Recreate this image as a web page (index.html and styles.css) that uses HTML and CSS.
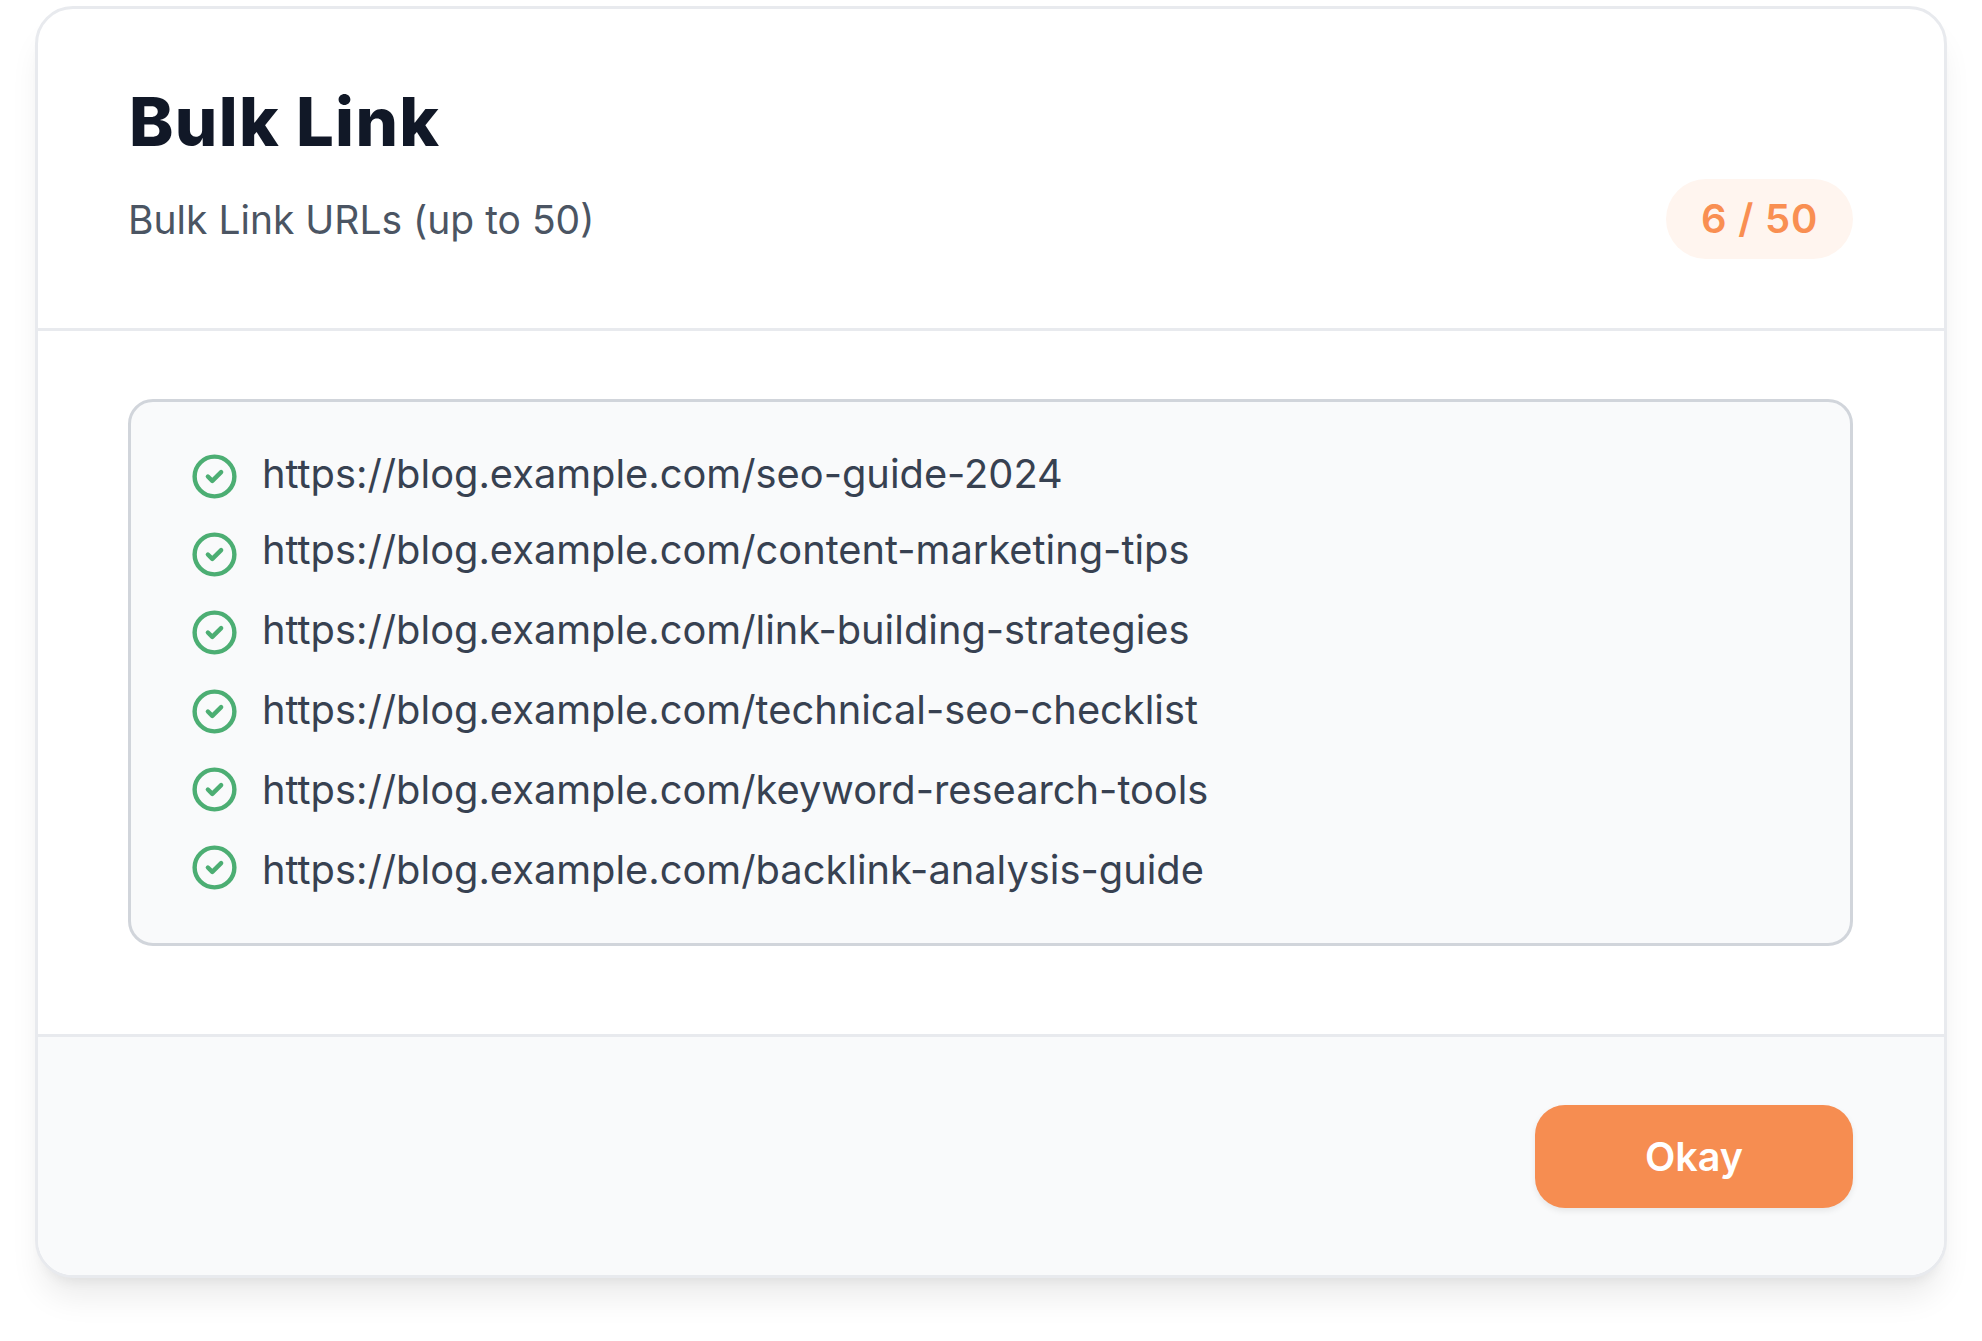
FILE: index.html
```html
<!DOCTYPE html>
<html lang="en">
<head>
  <meta charset="UTF-8">
  <meta name="viewport" content="width=device-width, initial-scale=1.0">
  <title>Bulk Link</title>
  <link rel="stylesheet" href="styles.css">
</head>
<body>
  <div class="card">
    <header class="card-header">
      <div class="heading">
        <h1>Bulk Link</h1>
        <p>Bulk Link URLs (up to 50)</p>
      </div>
      <span class="counter">6 / 50</span>
    </header>

    <div class="card-body">
      <div class="url-box">
        <div class="icons">
          <svg class="check" viewBox="0 0 24 24"><path d="M9 12l2 2 4-4m6 2a9 9 0 11-18 0 9 9 0 0118 0z"/></svg>
          <svg class="check" viewBox="0 0 24 24"><path d="M9 12l2 2 4-4m6 2a9 9 0 11-18 0 9 9 0 0118 0z"/></svg>
          <svg class="check" viewBox="0 0 24 24"><path d="M9 12l2 2 4-4m6 2a9 9 0 11-18 0 9 9 0 0118 0z"/></svg>
          <svg class="check" viewBox="0 0 24 24"><path d="M9 12l2 2 4-4m6 2a9 9 0 11-18 0 9 9 0 0118 0z"/></svg>
          <svg class="check" viewBox="0 0 24 24"><path d="M9 12l2 2 4-4m6 2a9 9 0 11-18 0 9 9 0 0118 0z"/></svg>
          <svg class="check" viewBox="0 0 24 24"><path d="M9 12l2 2 4-4m6 2a9 9 0 11-18 0 9 9 0 0118 0z"/></svg>
        </div>
        <ul class="urls">
          <li>https://blog.example.com/seo-guide-2024</li>
          <li>https://blog.example.com/content-marketing-tips</li>
          <li>https://blog.example.com/link-building-strategies</li>
          <li>https://blog.example.com/technical-seo-checklist</li>
          <li>https://blog.example.com/keyword-research-tools</li>
          <li>https://blog.example.com/backlink-analysis-guide</li>
        </ul>
      </div>
    </div>

    <footer class="card-footer">
      <button class="okay">Okay</button>
    </footer>
  </div>
</body>
</html>
```

FILE: styles.css
```css
* {
  box-sizing: border-box;
  margin: 0;
  padding: 0;
}

html,
body {
  height: 100%;
}

body {
  font-family: Inter, 'Noto Sans', sans-serif;
  background: #ffffff;
  padding: 6px 35px 63px 35px;
}

.card {
  background: #ffffff;
  border: 3px solid #e8eaee;
  border-radius: 38px;
  height: 1272px;
  display: flex;
  flex-direction: column;
  box-shadow: 0 25px 32px -6px rgba(0, 0, 0, 0.08), 0 10px 13px -8px rgba(0, 0, 0, 0.07);
}

.card-header {
  height: 322px;
  padding: 0 91px 69px 90px;
  border-bottom: 3px solid #e8eaee;
  display: flex;
  justify-content: space-between;
  align-items: flex-end;
}

.heading {
  margin-bottom: 9px;
}

.heading h1 {
  font-size: 67px;
  line-height: 84px;
  font-weight: 800;
  letter-spacing: 1.3px;
  text-indent: 1px;
  color: #111827;
}

.heading p {
  margin-top: 26px;
  font-size: 39px;
  line-height: 60px;
  color: #4b5563;
}

.counter {
  width: 187px;
  height: 80px;
  border-radius: 40px;
  background: #fff5ef;
  color: #f98f52;
  font-size: 40px;
  font-weight: 600;
  letter-spacing: 0.8px;
  line-height: 80px;
  text-align: center;
}

.card-body {
  height: 703px;
  padding: 68px 91px 0 90px;
}

.url-box {
  height: 547px;
  padding: 48px 57px 0 57px;
  background: #f9fafb;
  border: 3px solid #d1d5db;
  border-radius: 25px;
  display: flex;
  gap: 21px;
}

.icons {
  display: flex;
  flex-direction: column;
  gap: 25.2px;
}

.check {
  display: block;
  width: 53px;
  height: 53px;
  fill: none;
  stroke: #4cae73;
  stroke-width: 2;
  stroke-linecap: round;
  stroke-linejoin: round;
}

.urls {
  list-style: none;
  margin-top: -6px;
  display: flex;
  flex-direction: column;
  gap: 20px;
  font-size: 39.8px;
  line-height: 60px;
  color: #374151;
}

.urls li:first-child {
  margin-bottom: -4px;
}

.card-footer {
  flex: 1;
  padding: 68px 91px 0 0;
  background: #f9fafb;
  border-top: 3px solid #e8eaee;
  border-radius: 0 0 35px 35px;
  display: flex;
  justify-content: flex-end;
  align-items: flex-start;
}

.okay {
  width: 318px;
  height: 103px;
  border: none;
  border-radius: 30px;
  background: #f68d51;
  color: #ffffff;
  font-family: inherit;
  font-size: 39.5px;
  font-weight: 600;
  box-shadow: 0 3px 6px rgba(0, 0, 0, 0.08);
}
```
